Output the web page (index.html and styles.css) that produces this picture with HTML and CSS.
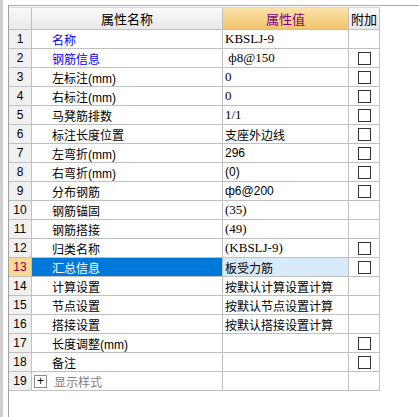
FILE: index.html
```html
<!DOCTYPE html>
<html lang="zh-CN">
<head>
    <meta charset="UTF-8">
    <title>属性编辑</title>
    <link rel="stylesheet" href="styles.css">
</head>
<body>
    <div class="frame">
        <div class="strip"></div>
        <div class="panel">
            <div class="grid">
                <!-- Header -->
                <div class="row head">
                    <div class="cell num"></div>
                    <div class="cell name">属性名称</div>
                    <div class="cell val hot">属性值</div>
                    <div class="cell add">附加</div>
                </div>

                <div class="row">
                    <div class="cell num">1</div>
                    <div class="cell name blue">名称</div>
                    <div class="cell val serif">KBSLJ-9</div>
                    <div class="cell add"></div>
                </div>
                <div class="row">
                    <div class="cell num">2</div>
                    <div class="cell name blue">钢筋信息</div>
                    <div class="cell val serif">&nbsp;ф8@150</div>
                    <div class="cell add"><span class="box"></span></div>
                </div>
                <div class="row">
                    <div class="cell num">3</div>
                    <div class="cell name">左标注(mm)</div>
                    <div class="cell val serif">0</div>
                    <div class="cell add"><span class="box"></span></div>
                </div>
                <div class="row">
                    <div class="cell num">4</div>
                    <div class="cell name">右标注(mm)</div>
                    <div class="cell val serif">0</div>
                    <div class="cell add"><span class="box"></span></div>
                </div>
                <div class="row">
                    <div class="cell num">5</div>
                    <div class="cell name">马凳筋排数</div>
                    <div class="cell val serif">1/1</div>
                    <div class="cell add"><span class="box"></span></div>
                </div>
                <div class="row">
                    <div class="cell num">6</div>
                    <div class="cell name">标注长度位置</div>
                    <div class="cell val">支座外边线</div>
                    <div class="cell add"><span class="box"></span></div>
                </div>
                <div class="row">
                    <div class="cell num">7</div>
                    <div class="cell name">左弯折(mm)</div>
                    <div class="cell val">296</div>
                    <div class="cell add"><span class="box"></span></div>
                </div>
                <div class="row">
                    <div class="cell num">8</div>
                    <div class="cell name">右弯折(mm)</div>
                    <div class="cell val">(0)</div>
                    <div class="cell add"><span class="box"></span></div>
                </div>
                <div class="row">
                    <div class="cell num">9</div>
                    <div class="cell name">分布钢筋</div>
                    <div class="cell val">ф6@200</div>
                    <div class="cell add"><span class="box"></span></div>
                </div>
                <div class="row">
                    <div class="cell num">10</div>
                    <div class="cell name">钢筋锚固</div>
                    <div class="cell val serif">(35)</div>
                    <div class="cell add"></div>
                </div>
                <div class="row">
                    <div class="cell num">11</div>
                    <div class="cell name">钢筋搭接</div>
                    <div class="cell val serif">(49)</div>
                    <div class="cell add"></div>
                </div>
                <div class="row">
                    <div class="cell num">12</div>
                    <div class="cell name">归类名称</div>
                    <div class="cell val serif">(KBSLJ-9)</div>
                    <div class="cell add"><span class="box"></span></div>
                </div>
                <div class="row selected">
                    <div class="cell num">13</div>
                    <div class="cell name">汇总信息</div>
                    <div class="cell val">板受力筋</div>
                    <div class="cell add"><span class="box"></span></div>
                </div>
                <div class="row">
                    <div class="cell num">14</div>
                    <div class="cell name">计算设置</div>
                    <div class="cell val">按默认计算设置计算</div>
                    <div class="cell add"></div>
                </div>
                <div class="row">
                    <div class="cell num">15</div>
                    <div class="cell name">节点设置</div>
                    <div class="cell val">按默认节点设置计算</div>
                    <div class="cell add"></div>
                </div>
                <div class="row">
                    <div class="cell num">16</div>
                    <div class="cell name">搭接设置</div>
                    <div class="cell val">按默认搭接设置计算</div>
                    <div class="cell add"></div>
                </div>
                <div class="row">
                    <div class="cell num">17</div>
                    <div class="cell name">长度调整(mm)</div>
                    <div class="cell val"></div>
                    <div class="cell add"><span class="box"></span></div>
                </div>
                <div class="row">
                    <div class="cell num">18</div>
                    <div class="cell name">备注</div>
                    <div class="cell val"></div>
                    <div class="cell add"><span class="box"></span></div>
                </div>
                <div class="row">
                    <div class="cell num">19</div>
                    <div class="cell name group"><span class="plus">+</span>显示样式</div>
                    <div class="cell val"></div>
                    <div class="cell add"></div>
                </div>
            </div>
        </div>
    </div>
</body>
</html>
```

FILE: styles.css
```css
/* General Styles */
body {
    margin: 0;
    padding: 0;
    background: #fff;
    color: #000;
    font-family: "Liberation Sans", "Noto Sans CJK SC", sans-serif;
    font-size: 12px;
}

.frame {
    display: flex;
    height: 100vh;
}

.strip {
    width: 3px;
    background: #cfcfcf;
}

.panel {
    flex: 1;
    margin-left: 5px;
    margin-top: 5px;
    padding-top: 1px;
    border-top: 1px solid #a8a8a8;
    border-left: 1px solid #a0a0a0;
}

.grid {
    width: 371px;
    border-top: 1px solid #d8d8d8;
}

/* Rows */
.row {
    display: grid;
    grid-template-columns: 23px 191px 126px 31px;
    height: 19px;
}

.row.head {
    height: 22px;
}

.cell {
    box-sizing: border-box;
    border-right: 1px solid #c0c0c0;
    border-bottom: 1px solid #c0c0c0;
    display: flex;
    align-items: center;
    white-space: nowrap;
    overflow: hidden;
}

.num {
    justify-content: center;
    background: #f0f0f0;
}

.name {
    padding-left: 20px;
}

.val {
    padding-left: 2px;
}

.add {
    justify-content: center;
}

.serif {
    font-family: "Liberation Serif", "Noto Sans CJK SC", serif;
    font-size: 13px;
}

.blue {
    color: #0000ff;
}

/* Header */
.head .cell {
    background: linear-gradient(#f9f9f9, #e9e9e9);
    justify-content: center;
    padding-left: 0;
    font-size: 13px;
}

.head .hot {
    background: linear-gradient(#fbe2ac, #f2c46a);
    color: #800080;
}

/* Checkbox */
.box {
    width: 11px;
    height: 11px;
    border: 1px solid #333;
    background: #fff;
}

/* Selected row */
.selected .num {
    background: #fcd896;
    color: #800040;
}

.selected .name {
    background: #0078d7;
    color: #fff;
}

.selected .val {
    background: #d8e9f9;
}

/* Group row */
.name.group {
    padding-left: 2px;
    color: #808080;
}

.plus {
    width: 11px;
    height: 11px;
    border: 1px solid #8c8c8c;
    margin-right: 7px;
    color: #000;
    font-size: 12px;
    line-height: 10px;
    text-align: center;
}
```
